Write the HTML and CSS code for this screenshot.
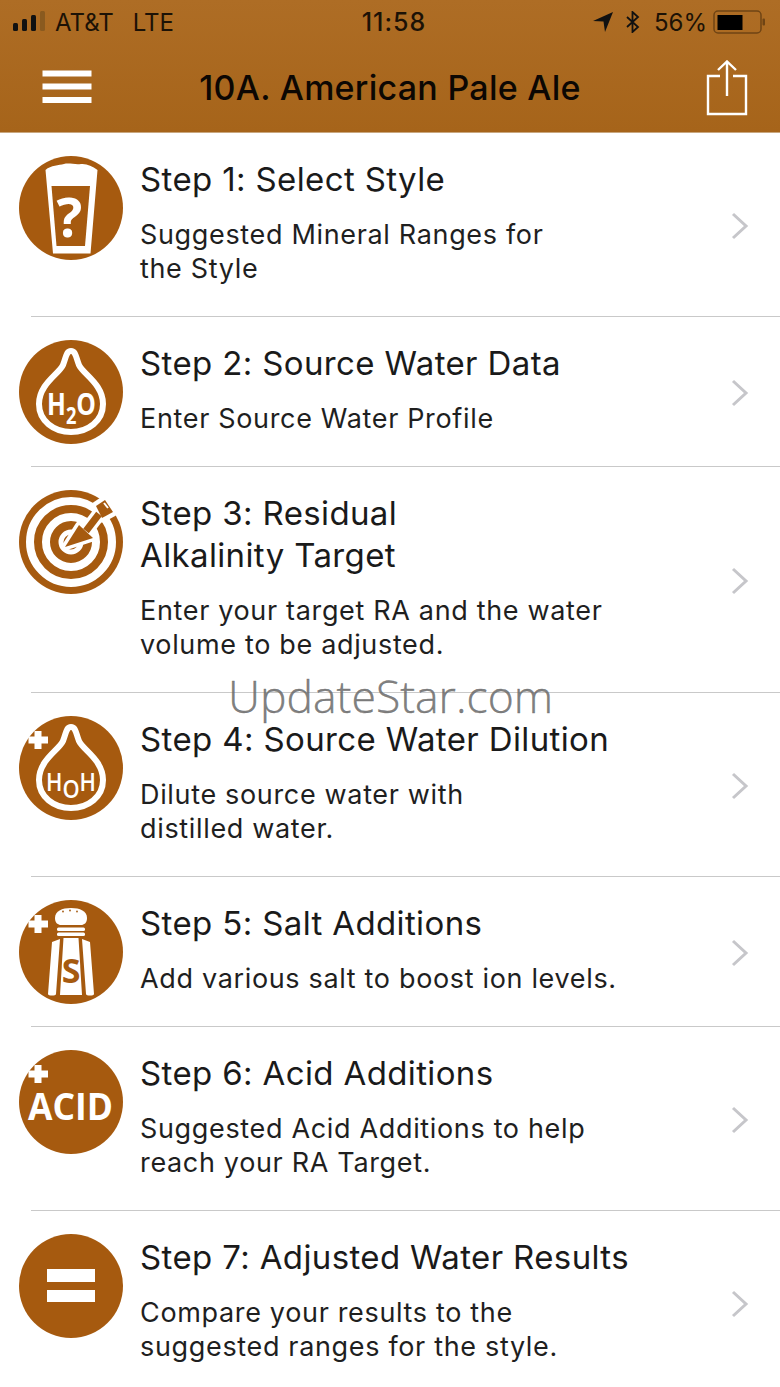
FILE: index.html
```html
<!DOCTYPE html>
<html lang="en">
<head>
<meta charset="utf-8">
<title>10A. American Pale Ale</title>
<link rel="stylesheet" href="styles.css">
</head>
<body>
<div class="screen">
  <header class="header">
    <div class="status">
      <div class="status-left">
        <svg class="signal" width="34" height="22" viewBox="0 0 34 22"><rect x="0" y="12" width="5" height="8" rx="1.5" fill="#111"/><rect x="9" y="8" width="5" height="12" rx="1.5" fill="#111"/><rect x="18" y="4" width="5" height="16" rx="1.5" fill="#111"/><rect x="27" y="0" width="5" height="20" rx="1.5" fill="#8a5a1f"/></svg>
        <span class="carrier">AT&amp;T</span>
        <span class="network">LTE</span>
      </div>
      <span class="time">11:58</span>
      <div class="status-right">
        <svg class="loc" width="20" height="20" viewBox="0 0 20 20"><path d="M0 9 L20 0 L12 20 L10.5 9.5 Z" fill="#111"/></svg>
        <svg class="bt" width="14" height="22" viewBox="0 0 14 22"><path d="M1 6 L12 16 L6.5 21 V1 L12 6 L1 16" fill="none" stroke="#111" stroke-width="1.8"/></svg>
        <span class="pct">56%</span>
        <svg class="battery" width="52" height="24" viewBox="0 0 52 24"><rect x="1" y="1" width="47" height="22" rx="4" fill="none" stroke="#6f4414" stroke-width="1.5"/><rect x="4.500" y="5" width="25" height="15" fill="#000"/><rect x="49.500" y="8.500" width="2.500" height="7" rx="1" fill="#6f4414"/></svg>
      </div>
    </div>
    <nav class="nav">
      <svg class="menu" width="50" height="34" viewBox="0 0 50 34"><rect x="0.500" y="0.500" width="49" height="6" fill="#fff"/><rect x="0.500" y="13.500" width="49" height="6" fill="#fff"/><rect x="0.500" y="27" width="49" height="6" fill="#fff"/></svg>
      <h1 class="title">10A. American Pale Ale</h1>
      <svg class="share" width="42" height="56" viewBox="0 0 42 56"><path d="M14 16 H2 V54 H40 V16 H27" fill="none" stroke="#fff" stroke-width="2.400"/><path d="M21 36 V2 M12 10 L21 1.500 L30 10" fill="none" stroke="#fff" stroke-width="2.400"/></svg>
    </nav>
  </header>

  <ul class="steps">
    <li class="step">
      <svg class="icon" viewBox="0 0 104 104"><circle cx="52" cy="52" r="52" fill="#a65a0f"/><path d="M26.500 14 C32 9 40 9.500 45 8 C50 6.500 56 9 62 8 C68 7.500 73 10 78.500 14 L71.500 97.500 H34 Z" fill="#fff"/><path d="M32.500 30 H71 L66 90 H37.500 Z" fill="#a65a0f"/><text class="glyph q" x="50.500" y="81" text-anchor="middle">?</text></svg>
      <div class="copy"><h2>Step 1: Select Style</h2><p>Suggested Mineral Ranges for<br>the Style</p></div>
      <svg class="chev" width="18" height="28" viewBox="0 0 18 28"><path d="M2 2 L15 14 L2 26" fill="none" stroke="#c6c6ca" stroke-width="3"/></svg>
    </li>
    <li class="step">
      <svg class="icon" viewBox="0 0 104 104"><circle cx="52" cy="52" r="52" fill="#a65a0f"/><path d="M52 11 C47 11 47 18 44 25 C40 34 20 44 20 64 C20 81 35 92 52 92 C69 92 84 81 84 64 C84 44 64 34 60 25 C57 18 57 11 52 11 Z" fill="none" stroke="#fff" stroke-width="6"/><text class="glyph h2o" x="28" y="75" textLength="49" lengthAdjust="spacingAndGlyphs">H<tspan class="sub" dy="9">2</tspan><tspan dy="-9">O</tspan></text></svg>
      <div class="copy"><h2>Step 2: Source Water Data</h2><p>Enter Source Water Profile</p></div>
      <svg class="chev" width="18" height="28" viewBox="0 0 18 28"><path d="M2 2 L15 14 L2 26" fill="none" stroke="#c6c6ca" stroke-width="3"/></svg>
    </li>
    <li class="step">
      <svg class="icon" viewBox="0 0 104 104"><circle cx="52" cy="52" r="52" fill="#a65a0f"/><circle cx="52" cy="52" r="41" fill="none" stroke="#fff" stroke-width="8"/><circle cx="52" cy="52" r="25" fill="none" stroke="#fff" stroke-width="8"/><circle cx="52" cy="52" r="10" fill="none" stroke="#fff" stroke-width="5"/><g fill="#fff" stroke="#fff" stroke-width="7" stroke-linejoin="round"><path d="M46 57 L60 35 L74 48 Z"/><path d="M77 16 L86 10 L94 22 L83 28 Z" stroke-width="9"/></g><path d="M67 41 L80 24" stroke="#fff" stroke-width="14"/><path d="M46 57 L60 35 L74 48 Z" fill="#a65a0f"/><path d="M67 41 L80 24" stroke="#a65a0f" stroke-width="7"/><path d="M77 16 L86 10 L94 22 L83 28 Z" fill="#a65a0f"/><path d="M85 13 L89 18" stroke="#fff" stroke-width="2"/></svg>
      <div class="copy"><h2>Step 3: Residual<br>Alkalinity Target</h2><p>Enter your target RA and the water<br>volume to be adjusted.</p></div>
      <svg class="chev" width="18" height="28" viewBox="0 0 18 28"><path d="M2 2 L15 14 L2 26" fill="none" stroke="#c6c6ca" stroke-width="3"/></svg>
    </li>
    <li class="step">
      <svg class="icon" viewBox="0 0 104 104"><circle cx="52" cy="52" r="52" fill="#a65a0f"/><path d="M19 15 V33 M9.500 24 H29" stroke="#fff" stroke-width="7"/><path d="M52 11 C47 11 47 18 44 25 C40 34 20 44 20 64 C20 81 35 92 52 92 C69 92 84 81 84 64 C84 44 64 34 60 25 C57 18 57 11 52 11 Z" fill="none" stroke="#fff" stroke-width="6"/><text class="glyph hoh" x="27" y="75" textLength="50" lengthAdjust="spacingAndGlyphs">H<tspan dy="7">O</tspan><tspan dy="-7">H</tspan></text></svg>
      <div class="copy"><h2>Step 4: Source Water Dilution</h2><p>Dilute source water with<br>distilled water.</p></div>
      <svg class="chev" width="18" height="28" viewBox="0 0 18 28"><path d="M2 2 L15 14 L2 26" fill="none" stroke="#c6c6ca" stroke-width="3"/></svg>
    </li>
    <li class="step">
      <svg class="icon" viewBox="0 0 104 104"><circle cx="52" cy="52" r="52" fill="#a65a0f"/><path d="M19 15 V33 M9.500 24 H29" stroke="#fff" stroke-width="7"/><path d="M36 18 C36 11 43 8 52 8 C61 8 68 11 68 18 C68 23 65 25 62 25 H42 C39 25 36 23 36 18 Z" fill="#fff"/><circle cx="44" cy="11.500" r="0.900" fill="#a65a0f"/><circle cx="51" cy="10.500" r="0.900" fill="#a65a0f"/><circle cx="58" cy="11.500" r="0.900" fill="#a65a0f"/><rect x="38" y="27.500" width="28" height="3.500" rx="1.500" fill="#fff"/><rect x="38" y="32.500" width="28" height="3.500" rx="1.500" fill="#fff"/><path d="M44.500 38 H59.500 L63 95 H41 Z" fill="#fff"/><path d="M33 42 L41 39 L37 94 C37 96 29 96 29 94 Z" fill="#fff"/><path d="M71 42 L63 39 L67 94 C67 96 75 96 75 94 Z" fill="#fff"/><text class="glyph salt" x="52" y="83" text-anchor="middle">S</text></svg>
      <div class="copy"><h2>Step 5: Salt Additions</h2><p>Add various salt to boost ion levels.</p></div>
      <svg class="chev" width="18" height="28" viewBox="0 0 18 28"><path d="M2 2 L15 14 L2 26" fill="none" stroke="#c6c6ca" stroke-width="3"/></svg>
    </li>
    <li class="step">
      <svg class="icon" viewBox="0 0 104 104"><circle cx="52" cy="52" r="52" fill="#a65a0f"/><path d="M19 15 V33 M9.500 24 H29" stroke="#fff" stroke-width="7"/><text class="glyph acid" x="9" y="70" textLength="85" lengthAdjust="spacingAndGlyphs">ACID</text></svg>
      <div class="copy"><h2>Step 6: Acid Additions</h2><p>Suggested Acid Additions to help<br>reach your RA Target.</p></div>
      <svg class="chev" width="18" height="28" viewBox="0 0 18 28"><path d="M2 2 L15 14 L2 26" fill="none" stroke="#c6c6ca" stroke-width="3"/></svg>
    </li>
    <li class="step">
      <svg class="icon" viewBox="0 0 104 104"><circle cx="52" cy="52" r="52" fill="#a65a0f"/><rect x="28" y="35" width="48" height="13" fill="#fff"/><rect x="28" y="56" width="48" height="12" fill="#fff"/></svg>
      <div class="copy"><h2>Step 7: Adjusted Water Results</h2><p>Compare your results to the<br>suggested ranges for the style.</p></div>
      <svg class="chev" width="18" height="28" viewBox="0 0 18 28"><path d="M2 2 L15 14 L2 26" fill="none" stroke="#c6c6ca" stroke-width="3"/></svg>
    </li>
  </ul>
  <div class="watermark">UpdateStar.com</div>
</div>
</body>
</html>
```

FILE: styles.css
```css
* { box-sizing: border-box; }
html, body { margin: 0; padding: 0; background: #fff; }
.screen {
  position: relative;
  width: 780px;
  height: 1387px;
  overflow: hidden;
  font-family: Inter, "Liberation Sans", sans-serif;
  color: #1a1a1a;
}
.header {
  height: 133px;
  background: linear-gradient(#ae6d25, #a6641a);
  border-bottom: 1px solid #c9a77f;
}
.status {
  height: 44px;
  display: flex;
  align-items: center;
  justify-content: space-between;
  padding: 0 15px 0 13px;
  font-size: 24px;
  color: #1c1206;
}
.status-left { display: flex; align-items: center; width: 306px; }
.status-right { display: flex; align-items: center; justify-content: flex-end; width: 296px; }
.signal { margin-right: 8px; }
.network { margin-left: 19px; }
.time { font-size: 25px; font-weight: 500; letter-spacing: 1px; }
.loc { margin-right: 13px; }
.bt { margin-right: 14px; }
.pct { margin-right: 6px; }
.nav {
  height: 88px;
  display: flex;
  align-items: center;
  padding: 0 32px 0 42px;
}
.menu { margin-top: -3px; flex: none; }
.share { margin-top: -1px; flex: none; }
.title {
  flex: 1;
  margin: -2px 18px 0 0;
  text-align: center;
  font-size: 34px;
  font-weight: 500;
  color: #0c0703;
  letter-spacing: 0.27px;
}
.steps { list-style: none; margin: 0; padding: 0; }
.step {
  display: flex;
  align-items: center;
  padding: 25px 31px 31px 19px;
  background: linear-gradient(#c9c9c9, #c9c9c9) 31px 100% / 749px 1px no-repeat;
}
.step:last-child { background: none; }
.icon {
  width: 104px;
  height: 104px;
  flex: none;
  align-self: flex-start;
  margin: -2px 17px -20px 0;
}
.copy { flex: 1; }
.copy h2 {
  margin: 0 0 18px;
  font-size: 33px;
  line-height: 42px;
  font-weight: 400;
  letter-spacing: 0.37px;
}
.copy p {
  margin: 0;
  font-size: 27px;
  line-height: 34px;
  letter-spacing: 0.66px;
  color: #1f1f1f;
}
.chev { flex: none; margin-top: 8px; }
.glyph { fill: #fff; font-family: "Open Sans", sans-serif; }
.q { font-size: 54px; font-weight: 700; }
.h2o { font-size: 31px; font-weight: 700; }
.h2o .sub { font-size: 23px; }
.hoh { font-size: 26px; font-weight: 600; }
.salt { fill: #a65a0f; font-size: 34px; font-weight: 700; }
.acid { font-size: 38px; font-weight: 700; }
.watermark {
  position: absolute;
  left: 228px;
  top: 666px;
  font-family: "Open Sans", sans-serif;
  font-weight: 300;
  font-size: 44.5px;
  line-height: 60px;
  color: rgba(105, 105, 105, 0.85);
  -webkit-text-stroke: 0.4px rgba(105, 105, 105, 0.85);
}
```
